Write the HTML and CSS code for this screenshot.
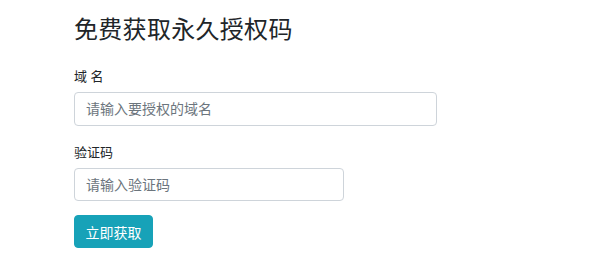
FILE: index.html
```html
<!DOCTYPE html>
<html lang="zh-CN">
<head>
<meta charset="utf-8">
<title>免费获取永久授权码</title>
<link rel="stylesheet" href="styles.css">
</head>
<body>
<div class="page">
  <h1 class="title">免费获取永久授权码</h1>
  <form class="form">
    <div class="field">
      <label class="label">域 名</label>
      <input class="input input-wide" type="text" placeholder="请输入要授权的域名">
    </div>
    <div class="field field-last">
      <label class="label">验证码</label>
      <input class="input input-narrow" type="text" placeholder="请输入验证码">
    </div>
    <button class="btn" type="button">立即获取</button>
  </form>
</div>
</body>
</html>
```

FILE: styles.css
```css
html, body {
  margin: 0;
  padding: 0;
  background: #fff;
}
body {
  font-family: "Liberation Sans", "Noto Sans CJK SC", sans-serif;
  color: #212529;
}
.page {
  padding: 14px 0 0 74px;
}
.title {
  margin: 0 0 22px 0;
  font-size: 24px;
  font-weight: 400;
  line-height: 32px;
  letter-spacing: 0.3px;
  color: #212529;
}
.form {
  display: flex;
  flex-direction: column;
  align-items: flex-start;
}
.field {
  display: flex;
  flex-direction: column;
  align-items: flex-start;
  margin-bottom: 18px;
}
.field-last {
  margin-bottom: 14px;
}
.label {
  font-size: 13px;
  line-height: 18px;
  margin-bottom: 6px;
  color: #212529;
}
.input {
  box-sizing: border-box;
  height: 34px;
  padding: 0 11px;
  border: 1px solid #ced4da;
  border-radius: 4px;
  font-family: inherit;
  font-size: 14px;
  color: #495057;
  background: #fff;
  outline: none;
}
.input::placeholder {
  color: #6c757d;
}
.input-wide {
  width: 363px;
}
.input-narrow {
  width: 270px;
  height: 33px;
}
.btn {
  box-sizing: border-box;
  height: 33px;
  width: 79px;
  padding: 0;
  border: 1px solid #17a2b8;
  border-radius: 4px;
  background: #17a2b8;
  color: #fff;
  font-family: inherit;
  font-size: 14px;
  cursor: pointer;
}
```
